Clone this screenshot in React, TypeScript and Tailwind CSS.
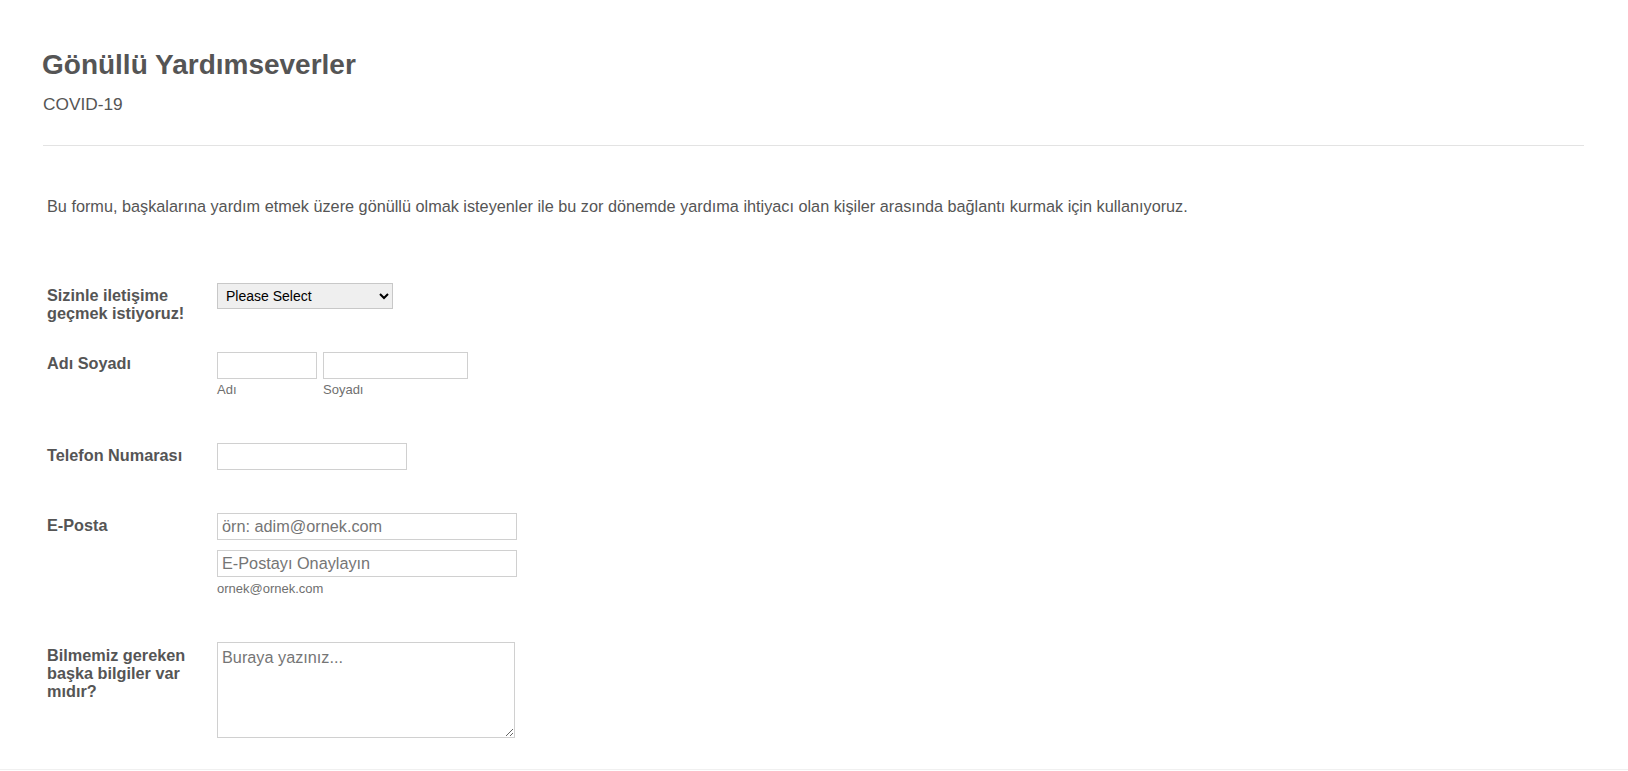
import React from "react";

const font = { fontFamily: '"Liberation Sans", Arial, sans-serif' };

function Label({ children, pt = "pt-[3px]" }: { children: React.ReactNode; pt?: string }) {
  return (
    <div className={`w-[170px] shrink-0 pr-[10px] ${pt} text-[16.25px] leading-[18.3px] font-bold text-[#555555]`}>
      {children}
    </div>
  );
}

export default function App() {
  return (
    <div className="min-h-[771px] w-full bg-white overflow-hidden" style={font}>
      <div className="pl-[43px] pr-[44px]">
        <div className="pt-[49px]">
          <h1 className="text-[28px] leading-[32px] font-bold text-[#555555] -ml-[1px]">
            Gönüllü Yardımseverler
          </h1>
          <div className="mt-[13px] text-[17.3px] leading-[20px] text-[#555555]">COVID-19</div>
        </div>
        <div className="mt-[31px] border-t border-[#e3e3e3]" />

        <div className="ml-[4px]">
          <p className="mt-[50px] text-[16.25px] leading-[20px] text-[#555555]">
            Bu formu, başkalarına yardım etmek üzere gönüllü olmak isteyenler ile bu zor dönemde yardıma ihtiyacı olan kişiler arasında bağlantı kurmak için kullanıyoruz.
          </p>

          {/* Row 1 */}
          <div className="mt-[66px] flex items-start">
            <Label pt="pt-[4px]">Sizinle iletişime geçmek istiyoruz!</Label>
            <select
              className="mt-[1px] h-[26px] w-[176px] border border-[#c8c8c8] bg-[#efefef] px-[4px] text-[14px] text-black"
              style={font}
              defaultValue=""
            >
              <option value="">Please Select</option>
              <option>E-Posta</option>
              <option>Telefon</option>
            </select>
          </div>

          {/* Row 2 */}
          <div className="mt-[29px] flex items-start">
            <Label pt="pt-[2px]">Adı Soyadı</Label>
            <div className="flex gap-[6px]">
              <div className="flex flex-col">
                <input className="h-[27px] w-[100px] border border-[#d0d0d0] bg-white px-[4px] text-[16px]" style={font} />
                <span className="mt-[3px] text-[13px] leading-[16px] text-[#6f6f6f]">Adı</span>
              </div>
              <div className="flex flex-col">
                <input className="h-[27px] w-[145px] border border-[#d0d0d0] bg-white px-[4px] text-[16px]" style={font} />
                <span className="mt-[3px] text-[13px] leading-[16px] text-[#6f6f6f]">Soyadı</span>
              </div>
            </div>
          </div>

          {/* Row 3 */}
          <div className="mt-[45px] flex items-start">
            <Label>Telefon Numarası</Label>
            <input className="h-[27px] w-[190px] border border-[#d0d0d0] bg-white px-[4px] text-[16px]" style={font} />
          </div>

          {/* Row 4 */}
          <div className="mt-[43px] flex items-start">
            <Label>E-Posta</Label>
            <div className="flex flex-col">
              <input
                className="h-[27px] w-[300px] border border-[#d0d0d0] bg-white px-[4px] text-[16.25px] placeholder:text-[#757575]"
                style={font}
                placeholder="örn: adim@ornek.com"
              />
              <input
                className="mt-[10px] h-[27px] w-[300px] border border-[#d0d0d0] bg-white px-[4px] text-[16.25px] placeholder:text-[#757575]"
                style={font}
                placeholder="E-Postayı Onaylayın"
              />
              <span className="mt-[4px] text-[13px] leading-[16px] text-[#6f6f6f]">ornek@ornek.com</span>
            </div>
          </div>

          {/* Row 5 */}
          <div className="mt-[45px] flex items-start">
            <Label pt="pt-[4px]">Bilmemiz gereken başka bilgiler var mıdır?</Label>
            <textarea
              className="h-[96px] w-[298px] border border-[#d0d0d0] bg-white px-[4px] pt-[4px] text-[16.25px] leading-[20px] placeholder:text-[#757575]"
              style={font}
              placeholder="Buraya yazınız..."
            />
          </div>
        </div>
      </div>
      <div className="mt-[31px] border-t border-[#f0f0f0]" />
    </div>
  );
}
